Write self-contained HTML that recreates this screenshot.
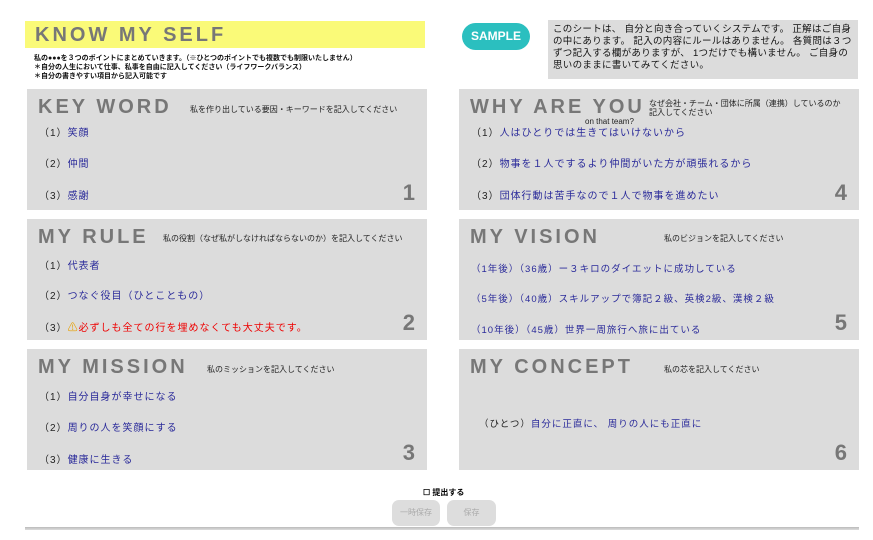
<!DOCTYPE html>
<html><head><meta charset="utf-8"><style>
body{margin:0;width:873px;height:540px;background:#fff;position:relative;overflow:hidden;font-family:"Liberation Sans","Noto Sans CJK JP",sans-serif;}
.a{position:absolute}
.hdr{left:25px;top:21px;width:400px;height:27px;background:#fafa78}
.ttl{font-weight:bold;color:#777;letter-spacing:3px;white-space:nowrap}
.p{position:absolute;background:#dcdcdc;width:400px;height:121px}
.p .t{position:absolute;left:11px;top:7px;font-size:20px}
.p .s{position:absolute;font-size:8px;color:#222;white-space:nowrap}
.p .l{position:absolute;left:12px;font-size:10px;color:#222;white-space:nowrap;letter-spacing:1px}
.p .l span{color:#2a2a9a}
.p .n{position:absolute;right:12px;bottom:4px;font-size:22px;font-weight:bold;color:#777}
.small{font-size:7px;color:#111;line-height:9px;font-weight:bold}
</style></head><body>
<div class="a hdr"><div class="ttl" style="position:absolute;left:10px;top:3px;font-size:20px">KNOW MY SELF</div></div>
<div class="a small" style="left:34px;top:54px;white-space:nowrap">私の●●●を３つのポイントにまとめていきます。（※ひとつのポイントでも複数でも制限いたしません）<br>＊自分の人生において仕事、私事を自由に記入してください（ライフワークバランス）<br>＊自分の書きやすい項目から記入可能です</div>
<div class="a" style="left:462px;top:23px;width:68px;height:27px;border-radius:14px;background:#2bbfbf;color:#fff;font-weight:bold;font-size:12px;line-height:27px;text-align:center">SAMPLE</div>
<div class="a" style="left:548px;top:20px;background:#dcdcdc;padding:4px 5px;font-size:9.5px;line-height:12px;color:#111;letter-spacing:.3px;width:300px;height:51px">このシートは、 自分と向き合っていくシステムです。 正解はご自身の中にあります。 記入の内容にルールはありません。 各質問は３つずつ記入する欄がありますが、 1つだけでも構いません。 ご自身の思いのままに書いてみてください。</div>

<div class="p" style="left:27px;top:89px"><div class="t ttl">KEY WORD</div><div class="s" style="left:163px;top:15px">私を作り出している要因・キーワードを記入してください</div>
<div class="l" style="top:35px">（1）<span>笑顔</span></div><div class="l" style="top:66px">（2）<span>仲間</span></div><div class="l" style="top:98px">（3）<span>感謝</span></div><div class="n">1</div></div>

<div class="p" style="left:459px;top:89px"><div class="t ttl">WHY ARE YOU</div><div class="s" style="left:190px;top:10px;line-height:9px">なぜ会社・チーム・団体に所属（連携）しているのか<br>記入してください</div><div class="s" style="left:126px;top:28px;font-size:8px">on that team?</div>
<div class="l" style="top:35px">（1）<span>人はひとりでは生きてはいけないから</span></div><div class="l" style="top:66px">（2）<span>物事を１人でするより仲間がいた方が頑張れるから</span></div><div class="l" style="top:98px">（3）<span>団体行動は苦手なので１人で物事を進めたい</span></div><div class="n">4</div></div>

<div class="p" style="left:27px;top:219px"><div class="t ttl">MY RULE</div><div class="s" style="left:136px;top:14px">私の役割（なぜ私がしなければならないのか）を記入してください</div>
<div class="l" style="top:38px">（1）<span>代表者</span></div><div class="l" style="top:68px">（2）<span>つなぐ役目（ひとこともの）</span></div><div class="l" style="top:100px">（3）<span style="color:#e8a000">⚠</span><span style="color:#e00">必ずしも全ての行を埋めなくても大丈夫です。</span></div><div class="n">2</div></div>

<div class="p" style="left:459px;top:219px"><div class="t ttl">MY VISION</div><div class="s" style="left:205px;top:14px">私のビジョンを記入してください</div>
<div class="l" style="top:42px;font-size:9.5px"><span>（1年後）（36歳）ー３キロのダイエットに成功している</span></div><div class="l" style="top:72px;font-size:9.5px"><span>（5年後）（40歳）スキルアップで簿記２級、英検2級、漢検２級</span></div><div class="l" style="top:103px;font-size:9.5px"><span>（10年後）（45歳）世界一周旅行へ旅に出ている</span></div><div class="n">5</div></div>

<div class="p" style="left:27px;top:349px"><div class="t ttl">MY MISSION</div><div class="s" style="left:180px;top:15px">私のミッションを記入してください</div>
<div class="l" style="top:39px">（1）<span>自分自身が幸せになる</span></div><div class="l" style="top:70px">（2）<span>周りの人を笑顔にする</span></div><div class="l" style="top:102px">（3）<span>健康に生きる</span></div><div class="n">3</div></div>

<div class="p" style="left:459px;top:349px"><div class="t ttl">MY CONCEPT</div><div class="s" style="left:205px;top:15px">私の芯を記入してください</div>
<div class="l" style="left:20px;top:67px;font-size:9.5px">（ひとつ）<span>自分に正直に、 周りの人にも正直に</span></div><div class="n">6</div></div>

<div class="a" style="left:423px;top:487px;font-size:8px;font-weight:bold">☐ 提出する</div>
<div class="a" style="left:392px;top:500px;width:48px;height:26px;border-radius:7px;background:#ddd;color:#aaa;font-size:8px;line-height:26px;text-align:center">一時保存</div>
<div class="a" style="left:447px;top:500px;width:49px;height:26px;border-radius:7px;background:#ddd;color:#aaa;font-size:8px;line-height:26px;text-align:center">保存</div>
<div class="a" style="left:25px;top:527px;width:834px;height:3px;background:linear-gradient(#bbb,#ddd)"></div>
</body></html>
